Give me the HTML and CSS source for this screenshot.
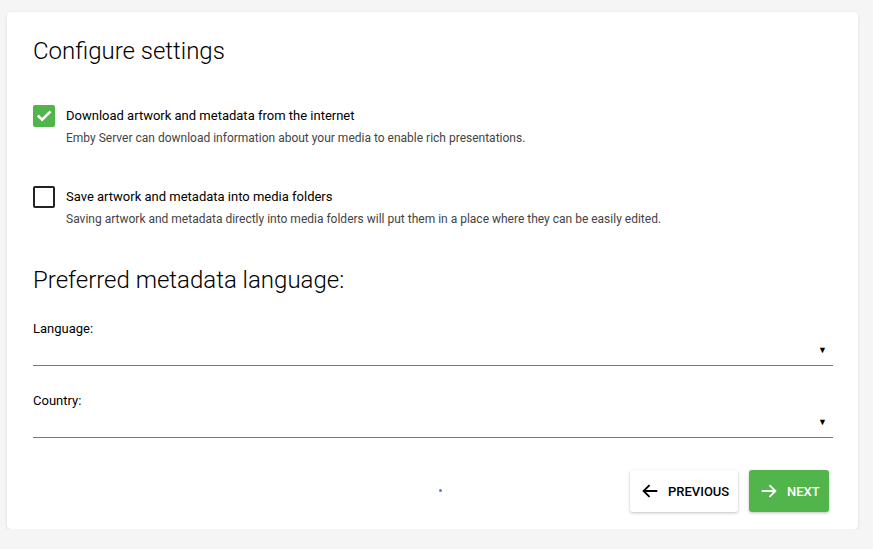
FILE: index.html
```html
<!DOCTYPE html>
<html>
<head>
<meta charset="utf-8">
<link rel="stylesheet" href="styles.css">
</head>
<body>
<div class="card">
  <h1 class="title">Configure settings</h1>

  <div class="check-row">
    <span class="box checked">
      <svg viewBox="0 0 24 24" width="18" height="18"><path d="M5 12.5l4.5 4.5L19.5 7" fill="none" stroke="#fff" stroke-width="3.4" stroke-linecap="square"/></svg>
    </span>
    <div class="check-text">
      <div class="check-label">Download artwork and metadata from the internet</div>
      <div class="check-desc">Emby Server can download information about your media to enable rich presentations.</div>
    </div>
  </div>

  <div class="check-row second">
    <span class="box"></span>
    <div class="check-text">
      <div class="check-label">Save artwork and metadata into media folders</div>
      <div class="check-desc">Saving artwork and metadata directly into media folders will put them in a place where they can be easily edited.</div>
    </div>
  </div>

  <h2 class="subtitle">Preferred metadata language:</h2>

  <div class="field">
    <div class="field-label">Language:</div>
    <div class="select"><span class="arrow">▼</span></div>
  </div>
  <div class="field">
    <div class="field-label">Country:</div>
    <div class="select"><span class="arrow">▼</span></div>
  </div>

  <div class="footer">
    <span class="spinner"></span>
    <button class="btn prev">
      <svg viewBox="0 0 24 24" width="22" height="22"><path d="M20 12H5M11.5 5.5L5 12l6.5 6.5" fill="none" stroke="#000" stroke-width="2"/></svg>
      <span>PREVIOUS</span>
    </button>
    <button class="btn next">
      <svg viewBox="0 0 24 24" width="22" height="22"><path d="M4 12h15M12.5 5.5L19 12l-6.5 6.5" fill="none" stroke="#fff" stroke-width="2"/></svg>
      <span>NEXT</span>
    </button>
  </div>
</div>
</body>
</html>
```

FILE: styles.css
```css
html, body {
  margin: 0;
  background: #f5f5f5;
}
body {
  padding: 12px 15px 0 7px;
  font-family: Roboto, "Liberation Sans", sans-serif;
  color: #222;
}
.card {
  background: #fff;
  border-radius: 4px;
  box-shadow: 0 1px 3px rgba(0,0,0,0.12);
  padding: 25px 25px 17px 26px;
}
.title {
  margin: 0;
  font-size: 24px;
  font-weight: 300;
  line-height: 28px;
  color: #000;
}
.check-row {
  display: flex;
  align-items: flex-start;
  margin-top: 40px;
}
.check-row.second {
  margin-top: 40px;
}
.box {
  width: 18px;
  height: 18px;
  border: 2px solid #222;
  border-radius: 2px;
  flex: none;
  display: flex;
  align-items: center;
  justify-content: center;
  margin-top: 0;
}
.box.checked {
  background: #52b54b;
  border-color: #52b54b;
}
.check-text {
  margin-left: 11px;
  padding-top: 1px;
}
.check-label {
  font-size: 13px;
  line-height: 20px;
  color: #000;
}
.check-desc {
  font-size: 12px;
  line-height: 16px;
  margin-top: 4px;
  color: #444;
}
.subtitle {
  margin: 39px 0 0 0;
  font-size: 24px;
  font-weight: 300;
  line-height: 28px;
  color: #000;
}
.field {
  margin-top: 27px;
}
.field + .field {
  margin-top: 27px;
}
.field-label {
  font-size: 13px;
  line-height: 16px;
  color: #000;
}
.select {
  height: 28px;
  border-bottom: 1px solid #777;
  display: flex;
  justify-content: flex-end;
  align-items: flex-end;
}
.arrow {
  font-size: 9px;
  line-height: 10px;
  color: #000;
  margin-right: 6px;
  margin-bottom: 10px;
}
.footer {
  display: flex;
  justify-content: flex-end;
  align-items: center;
  margin-top: 32px;
  padding-right: 4px;
  position: relative;
}
.spinner {
  position: absolute;
  left: 406px;
  top: 19px;
  width: 3px;
  height: 3px;
  border-radius: 50%;
  background: #4a80e0;
}
.btn {
  display: flex;
  align-items: center;
  height: 42px;
  border: none;
  border-radius: 3px;
  font-family: Roboto, "Liberation Sans", sans-serif;
  font-size: 13px;
  font-weight: 500;
  padding: 0 8px 0 9px;
  box-shadow: 0 1px 3px rgba(0,0,0,0.25);
  cursor: pointer;
}
.btn svg {
  margin-right: 7px;
}
.prev {
  background: #fff;
  color: #000;
  width: 108px;
}
.next {
  background: #52b54b;
  color: #fff;
  width: 80px;
  margin-left: 11px;
}
```
